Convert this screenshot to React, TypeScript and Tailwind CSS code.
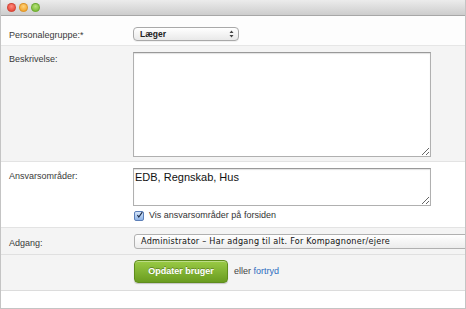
import React from "react";

const font = { fontFamily: '"Liberation Sans", Arial, sans-serif' };

function Label({ children }: { children: React.ReactNode }) {
  return <div className="w-[124px] shrink-0 pl-[8px] text-[9px] text-[#3a3a3a]">{children}</div>;
}

export default function App() {
  return (
    <div className="w-[466px] h-[309px] overflow-hidden bg-white" style={font}>
      <div className="w-[466px] h-[309px] border-l border-r border-b border-[#c4c4c4] overflow-hidden flex flex-col">
        {/* title bar */}
        <div className="h-[16px] shrink-0 bg-gradient-to-b from-[#ececec] to-[#cdcdcd] border-b border-[#a7a7a7] flex items-center gap-[3px] pl-[6px]">
          <span className="w-[9px] h-[9px] rounded-full bg-[radial-gradient(circle_at_50%_35%,#ff8a7a,#e0392b)] border border-[#c0392b]/60" />
          <span className="w-[9px] h-[9px] rounded-full bg-[radial-gradient(circle_at_50%_35%,#ffd27a,#ee9a1c)] border border-[#c9821a]/60" />
          <span className="w-[9px] h-[9px] rounded-full bg-[radial-gradient(circle_at_50%_35%,#b8e27a,#6cb22a)] border border-[#5a9a22]/60" />
        </div>

        {/* row 1 */}
        <div className="h-[30px] shrink-0 flex items-start pt-[11px] bg-[#fdfdfd] border-b border-[#e6e6e6]">
          <Label><div className="pt-[2px]">Personalegruppe:*</div></Label>
          <div className="ml-[8px] w-[106px] h-[14px] rounded-[4px] border border-[#a9a9a9] bg-gradient-to-b from-[#ffffff] to-[#e9e9e9] flex items-center justify-between pl-[6px] pr-[4px] shadow-[0_1px_0_rgba(0,0,0,0.05)]">
            <span className="text-[8.5px] font-bold text-[#222]">Læger</span>
            <svg width="5" height="8" viewBox="0 0 5 8"><path d="M2.5 0.5 L4.5 3 L0.5 3 Z M2.5 7.5 L4.5 5 L0.5 5 Z" fill="#444" /></svg>
          </div>
        </div>

        {/* row 2 */}
        <div className="h-[116px] shrink-0 flex items-start pt-[6px] bg-[#f4f4f4] border-b border-[#e3e3e3]">
          <Label><div className="pt-[1px]">Beskrivelse:</div></Label>
          <textarea
            readOnly
            className="ml-[8px] w-[298px] h-[105px] bg-white border border-[#b0b0b0] border-t-[#999] shadow-[inset_0_1px_1px_rgba(0,0,0,0.12)] outline-none p-[2px] text-[10px]"
            style={font}
          />
        </div>

        {/* row 3 */}
        <div className="h-[66px] shrink-0 flex items-start pt-[6px] bg-white border-b border-[#e3e3e3]">
          <Label><div className="pt-[2px]">Ansvarsområder:</div></Label>
          <div className="ml-[8px] flex flex-col">
            <textarea
              readOnly
              value="EDB, Regnskab, Hus"
              className="w-[298px] h-[38px] bg-white border border-[#b0b0b0] border-t-[#999] shadow-[inset_0_1px_1px_rgba(0,0,0,0.12)] outline-none px-[1px] py-[1px] text-[11px] leading-[14px] text-[#111]"
              style={font}
            />
            <div className="flex items-center gap-[5px] mt-[3px] pl-[1px]">
              <span className="w-[10px] h-[10px] rounded-[2px] border border-[#5c7fb8] bg-gradient-to-b from-[#d6e6fb] to-[#8eb3e6] flex items-center justify-center">
                <svg width="10" height="10" viewBox="0 0 10 10" className="-mt-[2px] ml-[1px]"><path d="M2 5 L4 8 L9 1" stroke="#1b2a45" strokeWidth="1.6" fill="none" /></svg>
              </span>
              <span className="text-[9px] text-[#333]">Vis ansvarsområder på forsiden</span>
            </div>
          </div>
        </div>

        {/* row 4 */}
        <div className="h-[27px] shrink-0 flex items-start pt-[6px] bg-[#f4f4f4] border-b border-[#e0e0e0]">
          <Label><div className="pt-[3px]">Adgang:</div></Label>
          <div className="ml-[9px] w-[360px] shrink-0 h-[15px] rounded-[3px] border border-[#b0b0b0] bg-gradient-to-b from-[#ffffff] to-[#ececec] flex items-center pl-[6px]">
            <span className="text-[9px] text-[#111] tracking-[0.25px]" style={{ fontFamily: '"DejaVu Sans Condensed", "DejaVu Sans", sans-serif' }}>Administrator – Har adgang til alt. For Kompagnoner/ejere</span>
          </div>
        </div>

        {/* row 5 */}
        <div className="h-[36px] shrink-0 flex items-start pt-[5px] bg-[#f4f4f4] border-b border-[#dcdcdc]">
          <div className="w-[124px] shrink-0" />
          <div className="ml-[9px] flex items-center gap-[6px]">
            <div className="w-[94px] h-[23px] rounded-[4px] border border-[#5f8d1c] bg-gradient-to-b from-[#9acb45] to-[#6a9c1f] flex items-center justify-center shadow-[0_1px_1px_rgba(0,0,0,0.2),inset_0_1px_0_rgba(255,255,255,0.35)]">
              <span className="text-[9px] font-bold text-white [text-shadow:0_-1px_0_rgba(0,0,0,0.3)]">Opdater bruger</span>
            </div>
            <span className="text-[9px] text-[#444]">eller <span className="text-[#2d6cc0]">fortryd</span></span>
          </div>
        </div>

        {/* bottom */}
        <div className="flex-1 bg-white" />
      </div>
    </div>
  );
}
